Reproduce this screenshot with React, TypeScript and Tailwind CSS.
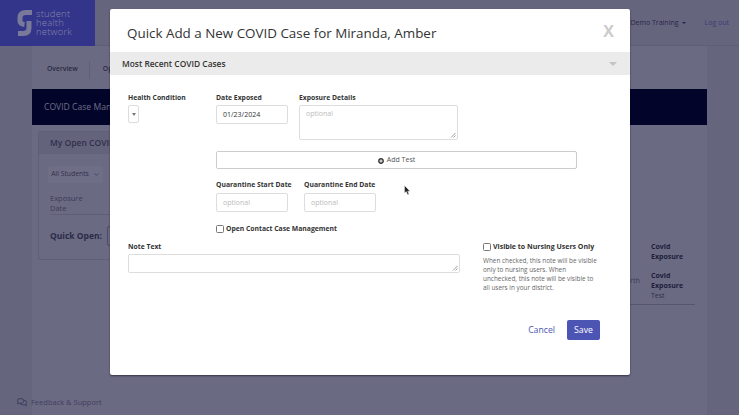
import { ChevronDown } from "lucide-react";
import { FaPlusCircle, FaRegComments } from "react-icons/fa";

const font = { fontFamily: '"Open Sans", sans-serif' };

function Label({ children }: { children: string }) {
  return <div className="text-[6.8px] leading-[11px] font-bold whitespace-nowrap text-[#333333]">{children}</div>;
}

function TextBox({ value, placeholder }: { value?: string; placeholder?: string }) {
  return (
    <div className="flex h-[19px] w-[72px] items-center rounded-[2px] border border-[#dddddd] px-[6px] pt-[1px] text-[7px]">
      {value ? <span className="text-[#333333]">{value}</span> : <span className="text-[#bbbbbb]">{placeholder}</span>}
    </div>
  );
}

function Grip() {
  return (
    <svg className="absolute right-[1px] bottom-[1px]" width="6" height="6" viewBox="0 0 6 6">
      <path d="M1 5.5 5.5 1M3.5 5.5 5.5 3.5" stroke="#777777" strokeWidth="0.7" />
    </svg>
  );
}

function Checkbox() {
  return <span className="inline-block h-[8px] w-[8px] shrink-0 rounded-[1.5px] border border-[#777777] bg-white" />;
}

function Modal() {
  return (
    <div className="absolute top-[9px] left-[110px] flex h-[366px] w-[520px] flex-col rounded-[2px] bg-white shadow-[0_1px_2px_rgba(0,0,0,0.5)]">
      <div className="flex h-[43px] items-center justify-between pr-[16px] pl-[17px]">
        <h1 className="pt-[5px] text-[13.4px] text-[#333333]">Quick Add a New COVID Case for Miranda, Amber</h1>
        <span className="pt-[1px] text-[16px] leading-none font-bold text-[#cccccc]">X</span>
      </div>
      <div className="flex h-[23px] items-center justify-between bg-[#ebebeb] pr-[13px] pl-[12px]">
        <span className="pt-[2px] text-[8.4px] font-semibold text-[#333333]">Most Recent COVID Cases</span>
        <span className="h-0 w-0 border-x-[4px] border-t-[4px] border-x-transparent border-t-[#c4c4c4]" />
      </div>

      <div className="flex pt-[17px] pl-[18px]">
        <div className="w-[88px]">
          <Label>Health Condition</Label>
          <div className="mt-[2px] flex h-[18px] w-[11px] items-center justify-center rounded-[2px] border border-[#dddddd]">
            <span className="h-0 w-0 border-x-[2px] border-t-[3px] border-x-transparent border-t-[#777777]" />
          </div>
        </div>
        <div className="w-[83px]">
          <Label>Date Exposed</Label>
          <div className="mt-[2px]">
            <TextBox value="01/23/2024" />
          </div>
        </div>
        <div>
          <Label>Exposure Details</Label>
          <div className="relative mt-[2px] h-[35px] w-[159px] rounded-[2px] border border-[#dddddd] px-[6px] py-[3px] text-[7px] text-[#bbbbbb]">
            optional
            <Grip />
          </div>
        </div>
      </div>

      <div className="mt-[11px] ml-[106px] flex h-[18px] w-[361px] items-center justify-center gap-[3px] rounded-[2px] border border-[#cccccc] pt-[1px] text-[7px] text-[#555555]">
        <FaPlusCircle size={6} className="text-[#333333]" />
        Add Test
      </div>

      <div className="mt-[10px] ml-[106px] flex">
        <div className="w-[88px]">
          <Label>Quarantine Start Date</Label>
          <div className="mt-[3px]">
            <TextBox placeholder="optional" />
          </div>
        </div>
        <div>
          <Label>Quarantine End Date</Label>
          <div className="mt-[3px]">
            <TextBox placeholder="optional" />
          </div>
        </div>
      </div>

      <div className="mt-[11px] ml-[106px] flex items-center gap-[2px]">
        <Checkbox />
        <Label>Open Contact Case Management</Label>
      </div>

      <div className="mt-[7px] flex pl-[18px]">
        <div>
          <Label>Note Text</Label>
          <div className="relative mt-[2px] h-[19px] w-[332px] rounded-[2px] border border-[#dddddd]">
            <Grip />
          </div>
        </div>
        <div className="ml-[23px] w-[118px]">
          <div className="flex items-center gap-[2px]">
            <Checkbox />
            <span className="text-[7px] leading-[11px] font-bold whitespace-nowrap text-[#333333]">Visible to Nursing Users Only</span>
          </div>
          <p className="mt-[4px] text-[6.4px] leading-[9.1px] whitespace-nowrap text-[#666666]">
            When checked, this note will be visible
            <br />
            only to nursing users. When
            <br />
            unchecked, this note will be visible to
            <br />
            all users in your district.
          </p>
        </div>
      </div>

      <div className="mt-[28px] flex items-center justify-end gap-[12px] pr-[30px]">
        <span className="text-[8.7px] text-[#4b55b0]">Cancel</span>
        <span className="flex h-[20px] w-[33px] items-center justify-center rounded-[2px] bg-[#4c54b4] text-[8.7px] text-white">Save</span>
      </div>
    </div>
  );
}

export default function App() {
  return (
    <div className="relative h-[415px] w-[739px] overflow-hidden bg-[#66657e]" style={font}>
      <header className="flex h-[46px] items-center border-b border-[#5f5e77]">
        <div className="flex h-[46px] w-[95px] items-center gap-[4px] bg-[#33358b] pl-[17px]">
          <svg width="15" height="28" viewBox="0 0 15 28" fill="none">
            <path d="M15 3.5H9Q3 3.5 3 9V12Q3 15 7.5 15.5" stroke="#79799a" strokeWidth="5" />
            <path d="M12 12V19Q12 24.5 6 24.5H1" stroke="#79799a" strokeWidth="5" />
          </svg>
          <div className="text-[9.5px] leading-[9.3px] font-light tracking-[0.2px] text-[#8584a8]">
            student
            <br />
            health
            <br />
            network
          </div>
        </div>
        <div className="ml-auto flex items-center gap-[19px] pt-[1px] pr-[10px] text-[7px]">
          <span className="flex items-center gap-[3px] text-[#26264a]">
            Demo Training
            <span className="h-0 w-0 border-x-[2px] border-t-[2px] border-x-transparent border-t-[#26264a]" />
          </span>
          <span className="text-[#3a3c74]">Log out</span>
        </div>
      </header>

      <main className="mx-[32px] h-[369px] bg-[#6b6a83]">
        <nav className="flex h-[43px] items-center pt-[4px] pl-[15px] text-[6.8px] font-semibold text-[#2a2a44]">
          <span>Overview</span>
          <span className="mr-[13px] ml-[11px] h-[18px] w-px bg-[#605f78]" />
          <span>Open Cases</span>
        </nav>
        <div className="flex h-[36px] items-center bg-[#03042a] pl-[12px] text-[8.6px] whitespace-nowrap text-[#6f6f86]">COVID Case Management</div>

        <div className="mt-[6px] flex pr-[12px] pl-[6px]">
          <section className="h-[129px] w-[300px] rounded-[2px] border border-[#605f78]">
            <div className="flex h-[22px] items-center bg-[#64637c] pl-[11px] text-[8.5px] font-semibold text-[#2f2f4c]">My Open COVID Cases</div>
            <div className="mt-[12px] ml-[9px] flex h-[17px] w-[55px] items-center justify-center gap-[4px] rounded-[2px] bg-[#6f6e87] text-[6.8px] text-[#2f2f4c]">
              All Students
              <ChevronDown size={7} />
            </div>
            <div className="mt-[10px] ml-[11px] border-b border-[#5f5e77] pb-[1px] text-[7.5px] leading-[10px] text-[#3b3b58]">
              Exposure
              <br />
              Date
            </div>
            <div className="mt-[11px] flex items-center pl-[11px]">
              <span className="w-[57px] pt-[1px] text-[8.5px] font-bold whitespace-nowrap text-[#2a2a48]">Quick Open:</span>
              <span className="h-[20px] flex-1 rounded-[2px] border border-[#4a4a70]" />
            </div>
          </section>

          <section className="flex h-[174px] flex-1 justify-end border-b border-[#56556e] pr-[12px]">
            <div className="mt-[145px] mr-[11px] text-[7px] leading-[10px] text-[#3b3b58]">North</div>
            <div className="mt-[111px] w-[32px] text-[7px] leading-[10px] font-bold text-[#1d1d3a]">
              Covid
              <br />
              Exposure
              <div className="mt-[9px]">Covid</div>
              Exposure
              <div className="font-normal text-[#2f2f4c]">Test</div>
            </div>
          </section>
        </div>
      </main>

      <div className="absolute bottom-[7px] left-[17px] flex items-center gap-[4px] text-[7.5px] text-[#3f3f5e]">
        <FaRegComments size={10} />
        Feedback &amp; Support
      </div>

      <Modal />

      <svg className="absolute top-[185px] left-[404px]" width="7" height="11" viewBox="0 0 7 11">
        <path d="M0.5 0.5V8L2.3 6.6 3.6 9.8 5 9.2 3.7 6.2H6Z" fill="#222222" stroke="#ffffff" strokeWidth="0.4" />
      </svg>
    </div>
  );
}
